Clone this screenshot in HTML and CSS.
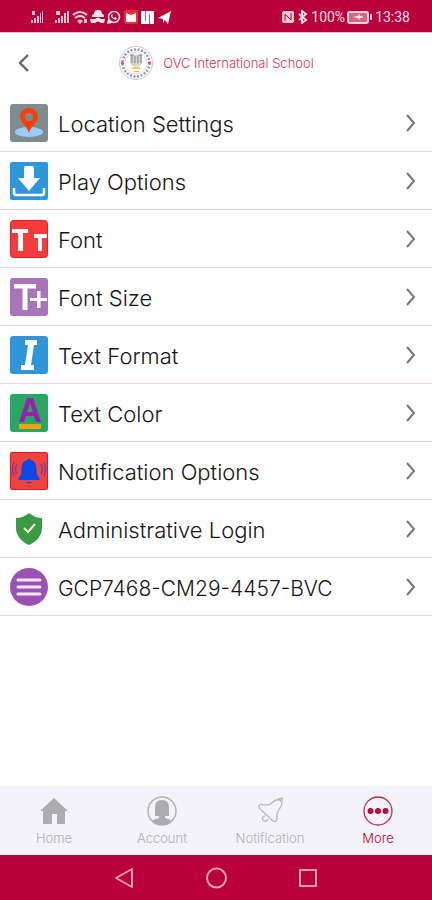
FILE: index.html
```html
<!DOCTYPE html>
<html lang="en">
<head>
<meta charset="utf-8">
<meta name="viewport" content="width=device-width, initial-scale=1">
<title>More</title>
<link rel="stylesheet" href="styles.css">
</head>
<body>
<div class="status">
  <svg class="status-left" width="144" height="16" viewBox="0 0 144 16" fill="#f5c3d0" aria-hidden="true">
    <path d="M1 11h2v3H1zM4 9h2v5H4zM7 7h2v7H7zM10 4h1v10h-1zM12 2h1v12h-1zM2 2h3v4H2z"/>
    <path d="M25 11h2v3h-2zM28 9h2v5h-2zM31 7h2v7h-2zM34 4h2v10h-2zM37 2h2v12h-2zM26 2h4v4h-4z"/>
    <g fill="none" stroke="#f9d5de" stroke-width="2"><path d="M43 6q7-6 14 0M45 9q5-4 10 0"/></g>
    <path d="M47 12q3-3 6 0l-3 3zM54 10h3v4h-3z"/>
    <path fill="#fbe3e9" d="M62 7q0-2 2-2 0-4 4-4t4 4q2 0 2 2v1H62zM60 10h5q3-3 6 0h4l-1 4h-3q-3-3-6 0h-4z"/>
    <circle cx="84" cy="8" r="5.500" fill="none" stroke="#fbe3e9" stroke-width="1.500"/>
    <path fill="#fbe3e9" d="M77 15l1-5 4 4zM82 5l-1 1q0 4 5 5l1-2-2-1-1 1-2-2 1-1z"/>
    <rect x="94" y="1" width="14" height="14" rx="2" fill="#f02a30"/>
    <path fill="#fff" d="M96 4l5 2 5-2v9H96z"/>
    <path fill="#fff" d="M111 2h13v13h-13z"/><path fill="#d05778" d="M115 2h1v10h-1zM119 5h1v10h-1z"/>
    <path fill="#fff" d="M128 9l13-7-3 13-3-4-2 3v-4z"/>
  </svg>
  <div class="status-right">
    <svg width="28" height="14" viewBox="0 0 28 14" aria-hidden="true">
      <rect x="1" y="1" width="12" height="12" rx="2" fill="#f7cbd6"/>
      <path d="M4 11V4l6 6V3" fill="none" stroke="#ba003c" stroke-width="1"/>
      <path d="M18 4l7 6-4 3V1l4 3-7 6" fill="none" stroke="#f9d5de" stroke-width="2"/>
    </svg>
    <span>100%</span>
    <svg width="26" height="14" viewBox="0 0 26 14" aria-hidden="true">
      <rect x="1" y="2" width="20" height="11" rx="2" fill="#d86486" stroke="#f9d5de" stroke-width="2"/>
      <path d="M6 7l5-1 1-2 1 2 4 1-4 1-1 2-1-2z" fill="#fff"/><path d="M23 4h2v6h-2z" fill="#f5c3d0"/>
    </svg>
    <span>13:38</span>
  </div>
</div>

<header class="top">
  <button class="back" aria-label="Back">
    <svg width="12" height="20" viewBox="0 0 12 20"><path d="M10 2L2 10l8 8" fill="none" stroke="#666" stroke-width="2.4"/></svg>
  </button>
  <div class="brand">
    <svg width="36" height="36" viewBox="0 0 36 36" aria-hidden="true">
      <circle cx="18" cy="18" r="16.5" fill="#fff" stroke="#c6c8d8" stroke-width="1"/>
      <circle cx="18" cy="18" r="13.5" fill="none" stroke="#949abc" stroke-width="2.5" stroke-dasharray="2 1.6"/>
      <circle cx="18" cy="18" r="11" fill="#fff" stroke="#dcdde6" stroke-width="1"/>
      <path d="M12 10h12v7q0 4-6 5-6-1-6-5z" fill="#d5d5d5"/>
      <path d="M14 10v8M17 11v7M20 11v7M23 10v8M12 10h4M20 10h4" stroke="#858585" stroke-width="1"/>
      <path d="M14 22h8v2h-8z" fill="#f1cf56"/><path d="M16 26h5v1h-5z" fill="#e9a4a4"/>
      <circle cx="4.500" cy="18" r="1.500" fill="#dd5164"/><circle cx="31.500" cy="18" r="1.500" fill="#dd5164"/>
    </svg>
    <h1>OVC International School</h1>
  </div>
</header>

<main>
  <ul class="settings">
    <li><a href="#location">
      <svg class="ico" viewBox="0 0 38 38"><rect width="38" height="38" rx="3" fill="#7f8c8d"/><ellipse cx="19" cy="28" rx="14" ry="5" fill="#9acbfa"/><path fill="#fa3e05" fill-rule="evenodd" d="M19 29C17 22 10 18 10 12.500a9 8.500 0 0 1 18 0C28 18 21 22 19 29zM19 9a4 4 0 1 0 0 8 4 4 0 0 0 0-8z"/></svg>
      <span>Location Settings</span><svg class="chev" viewBox="0 0 10 18"><path d="M1 1l7 8-7 8"/></svg></a></li>
    <li><a href="#play">
      <svg class="ico" viewBox="0 0 38 38"><rect width="38" height="38" rx="2" fill="#2f97d9"/><path fill="#fff" d="M14 6q0-2 2-2h6q2 0 2 2v10h6L19 29 8 16h6z"/><path d="M4 26v5q0 2 2 2h26q2 0 2-2v-5" fill="none" stroke="#fff" stroke-width="2.500"/></svg>
      <span>Play Options</span><svg class="chev" viewBox="0 0 10 18"><path d="M1 1l7 8-7 8"/></svg></a></li>
    <li><a href="#font">
      <svg class="ico" viewBox="0 0 38 38"><rect x=".5" y=".5" width="37" height="37" rx="3" fill="#f53b3b" stroke="#ed1c24"/><path fill="#fff" d="M2 9h16v4h-5v18H8V13H2zM24 14h13v4h-5v13h-4V18h-4z"/></svg>
      <span>Font</span><svg class="chev" viewBox="0 0 10 18"><path d="M1 1l7 8-7 8"/></svg></a></li>
    <li><a href="#size">
      <svg class="ico" viewBox="0 0 38 38"><rect width="38" height="38" rx="3" fill="#a874ba"/><path fill="#fff" d="M4 6h22v4.500h-8.500V32h-5V10.500H4zM27 13h3.500v7H37v3h-6.500v7H27v-7h-7v-3h7z"/></svg>
      <span>Font Size</span><svg class="chev" viewBox="0 0 10 18"><path d="M1 1l7 8-7 8"/></svg></a></li>
    <li><a href="#format">
      <svg class="ico" viewBox="0 0 38 38"><rect width="38" height="38" rx="3" fill="#2f97d9"/><path fill="#fff" d="M15 4h12v5h-3l-3 20h3v5H11v-5h4l3-20h-3z"/></svg>
      <span>Text Format</span><svg class="chev" viewBox="0 0 10 18"><path d="M1 1l7 8-7 8"/></svg></a></li>
    <li><a href="#color">
      <svg class="ico" viewBox="0 0 38 38"><rect width="38" height="38" rx="3" fill="#27a763"/><path fill="#981fb0" fill-rule="evenodd" d="M17 4h6l8 24h-5l-2-6h-8l-2 6H9zM20 9l-3 9h6z"/><path fill="#f3a00c" d="M9 30h22v5H9z"/></svg>
      <span>Text Color</span><svg class="chev" viewBox="0 0 10 18"><path d="M1 1l7 8-7 8"/></svg></a></li>
    <li><a href="#notify">
      <svg class="ico" viewBox="0 0 38 38"><rect x=".5" y=".5" width="37" height="37" rx="1" fill="#ef4340" stroke="#e8141b"/><path fill="#0b48e8" d="M17.500 8a1.500 1.500 0 0 1 3 0c5 1 6 5 6 10 0 4 1 6 3 8v2h-21v-2c2-2 3-4 3-8 0-5 1-9 6-10zM16 30h6q-3 3-6 0z"/><g fill="none" stroke="#7a3fa0" stroke-width="1.500"><path d="M4 10q-3 7 0 14M7 12q-3 5 0 10M34 10q3 7 0 14M31 12q3 5 0 10"/></g></svg>
      <span>Notification Options</span><svg class="chev" viewBox="0 0 10 18"><path d="M1 1l7 8-7 8"/></svg></a></li>
    <li><a href="#admin">
      <svg class="ico" viewBox="0 0 38 38"><path fill="#3a9b42" d="M19 3q6 5 13 5v10c0 8-6 14-13 17C12 32 6 26 6 18V8q7 0 13-5z"/><path d="M14 18l4 4 7-8" fill="none" stroke="#e4f6d6" stroke-width="2"/></svg>
      <span>Administrative Login</span><svg class="chev" viewBox="0 0 10 18"><path d="M1 1l7 8-7 8"/></svg></a></li>
    <li><a class="code" href="#code">
      <svg class="ico" viewBox="0 0 38 38"><circle cx="19" cy="19" r="19" fill="#9b50b6"/><path d="M8 12h22M8 19h22M8 26h22" stroke="#f6eafa" stroke-width="3" stroke-linecap="round"/></svg>
      <span>GCP7468-CM29-4457-BVC</span><svg class="chev" viewBox="0 0 10 18"><path d="M1 1l7 8-7 8"/></svg></a></li>
  </ul>
</main>

<nav class="tabs">
  <a href="#home"><svg viewBox="0 0 30 30"><path fill="#adadb0" d="M15 2l14 13h-3v13h-8V18h-5v10H4V15H1z"/></svg>Home</a>
  <a href="#account"><svg viewBox="0 0 30 30"><circle cx="15" cy="15" r="14" fill="none" stroke="#b4b4b7" stroke-width="1.500"/><path fill="#adadb0" d="M8 20V11q0-7 7-7t7 7v9h-4v2q5 1 7 3-4 4-10 4T5 25q2-2 7-3v-2z"/></svg>Account</a>
  <a href="#notification"><svg viewBox="0 0 30 30"><path d="M4 12q-1-3 2-4 7 3 12-2 3-3 7-2l2 2q0 3-2 6-4 5-3 11-1 4-4 2L4 12zM10 20q-4 1-2 4 3 3 5-1M23 3l4-1v4" fill="none" stroke="#b8b8bb" stroke-width="1.300"/></svg>Notification</a>
  <a class="active" href="#more" aria-current="page"><svg viewBox="0 0 30 30"><circle cx="15" cy="15" r="14" fill="none" stroke="#c52a55" stroke-width="1.300"/><g fill="#c00038"><circle cx="7.500" cy="15" r="3"/><circle cx="15" cy="15" r="3"/><circle cx="22.500" cy="15" r="3"/></g></svg>More</a>
</nav>

<div class="system">
  <button aria-label="Back"><svg viewBox="0 0 22 22"><path d="M19 2v18L3 11z"/></svg></button>
  <button aria-label="Home"><svg viewBox="0 0 22 22"><circle cx="11.500" cy="11" r="9.500"/></svg></button>
  <button aria-label="Recent apps"><svg viewBox="0 0 22 22"><rect x="3" y="3" width="16" height="16"/></svg></button>
</div>
</body>
</html>
```
FILE: styles.css
```css
* { box-sizing: border-box; }

body {
  margin: 0;
  min-height: 100vh;
  display: flex;
  flex-direction: column;
  background: #fff;
  color: #161616;
  font-family: Inter, "Liberation Sans", sans-serif;
  font-weight: 300;
}

a { color: inherit; text-decoration: none; }

button {
  display: flex;
  padding: 0;
  border: 0;
  background: none;
}

.status {
  display: flex;
  align-items: center;
  justify-content: space-between;
  height: 33px;
  padding: 2px 22px 0 30px;
  background: #ba003c;
  border-bottom: 1px solid #f3bcc8;
}

.status-right {
  display: flex;
  align-items: center;
  gap: 2px;
  color: #fbdde4;
  font-family: Roboto, sans-serif;
  font-size: 14px;
  font-weight: 400;
}

.top {
  display: grid;
  grid-template-columns: 1fr auto 1fr;
  align-items: center;
  height: 61px;
  padding: 0 18px 2px;
}

.brand {
  display: flex;
  align-items: center;
  gap: 9px;
}

.brand h1 {
  margin: 0;
  color: #dc3055;
  font-size: 13px;
  font-weight: 300;
}

.settings {
  margin: 0;
  padding: 0;
  list-style: none;
}

.settings a {
  display: flex;
  align-items: center;
  gap: 10px;
  height: 58px;
  padding: 0 16px 0 10px;
  border-bottom: 1px solid #f3d3d8;
  font-size: 22px;
}

.settings .code { font-size: 21px; }

.settings span {
  flex: 1;
  padding-top: 3px;
}

.ico { width: 38px; height: 38px; }

.chev {
  width: 10px;
  height: 18px;
  fill: none;
  stroke: #777;
  stroke-width: 2;
}

.tabs {
  display: grid;
  grid-template-columns: repeat(4, 1fr);
  height: 69px;
  margin-top: auto;
  background: #f4f3f9;
  color: #aeaeb2;
  font-size: 13px;
}

.tabs a {
  display: flex;
  flex-direction: column;
  align-items: center;
  gap: 4px;
  padding-top: 10px;
}

.tabs svg { width: 30px; height: 30px; }

.tabs .active { color: #c00038; }

.system {
  display: flex;
  align-items: center;
  justify-content: center;
  gap: 70px;
  height: 45px;
  background: #ba003c;
}

.system svg {
  width: 22px;
  height: 22px;
  fill: none;
  stroke: #e3a0b3;
  stroke-width: 2;
  stroke-linejoin: round;
}
```
